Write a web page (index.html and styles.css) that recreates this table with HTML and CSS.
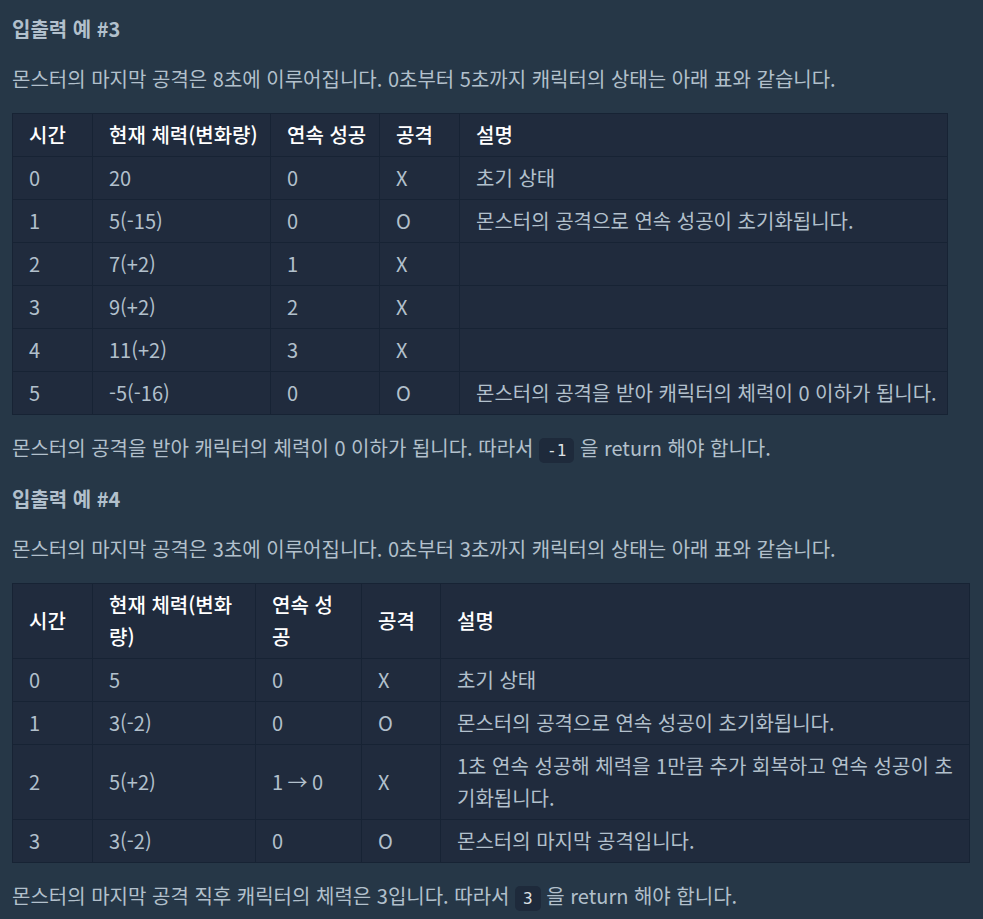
FILE: index.html
```html
<!DOCTYPE html>
<html lang="ko">
<head>
<meta charset="utf-8">
<link rel="stylesheet" href="styles.css">
</head>
<body>
<div class="content">
  <h5 class="heading">입출력 예 #3</h5>
  <p class="lead">몬스터의 마지막 공격은 8초에 이루어집니다. 0초부터 5초까지 캐릭터의 상태는 아래 표와 같습니다.</p>
  <table class="tbl tbl-fit">
    <colgroup><col class="c1"><col class="t1c2"><col class="t1c3"><col class="t1c4"><col class="t1c5"></colgroup>
    <thead><tr><th>시간</th><th>현재 체력(변화량)</th><th>연속 성공</th><th>공격</th><th>설명</th></tr></thead>
    <tbody>
      <tr><td>0</td><td>20</td><td>0</td><td>X</td><td>초기 상태</td></tr>
      <tr><td>1</td><td>5(-15)</td><td>0</td><td>O</td><td>몬스터의 공격으로 연속 성공이 초기화됩니다.</td></tr>
      <tr><td>2</td><td>7(+2)</td><td>1</td><td>X</td><td></td></tr>
      <tr><td>3</td><td>9(+2)</td><td>2</td><td>X</td><td></td></tr>
      <tr><td>4</td><td>11(+2)</td><td>3</td><td>X</td><td></td></tr>
      <tr><td>5</td><td>-5(-16)</td><td>0</td><td>O</td><td>몬스터의 공격을 받아 캐릭터의 체력이 0 이하가 됩니다.</td></tr>
    </tbody>
  </table>
  <p class="after">몬스터의 공격을 받아 캐릭터의 체력이 0 이하가 됩니다. 따라서 <code class="chip">-1</code> 을 return 해야 합니다.</p>

  <h5 class="heading">입출력 예 #4</h5>
  <p class="lead">몬스터의 마지막 공격은 3초에 이루어집니다. 0초부터 3초까지 캐릭터의 상태는 아래 표와 같습니다.</p>
  <table class="tbl tbl-full">
    <colgroup><col class="c1"><col class="t2c2"><col class="t2c3"><col class="t2c4"><col></colgroup>
    <thead><tr><th>시간</th><th>현재 체력(변화량)</th><th>연속 성공</th><th>공격</th><th>설명</th></tr></thead>
    <tbody>
      <tr><td>0</td><td>5</td><td>0</td><td>X</td><td>초기 상태</td></tr>
      <tr><td>1</td><td>3(-2)</td><td>0</td><td>O</td><td>몬스터의 공격으로 연속 성공이 초기화됩니다.</td></tr>
      <tr><td>2</td><td>5(+2)</td><td>1 → 0</td><td>X</td><td>1초 연속 성공해 체력을 1만큼 추가 회복하고 연속 성공이 초기화됩니다.</td></tr>
      <tr><td>3</td><td>3(-2)</td><td>0</td><td>O</td><td>몬스터의 마지막 공격입니다.</td></tr>
    </tbody>
  </table>
  <p class="after last">몬스터의 마지막 공격 직후 캐릭터의 체력은 3입니다. 따라서 <code class="chip">3</code> 을 return 해야 합니다.</p>
</div>
</body>
</html>
```
FILE: styles.css
```css
html, body {
  margin: 0;
  padding: 0;
  background: #263747;
}
body {
  font-family: "Noto Sans CJK KR", "Noto Sans", sans-serif;
  color: #b2c0cc;
  font-size: 20px;
}
.content {
  width: 958px;
  padding: 13px 0 0 12px;
}
.heading {
  margin: 0 0 18px;
  font-size: 20px;
  line-height: 32px;
  font-weight: 700;
  color: #b2c0cc;
}
.lead {
  margin: 0 0 18px;
  line-height: 32px;
}
.after {
  margin: 0 0 19px;
  line-height: 32px;
}
.tbl {
  border-collapse: collapse;
  background: #202b3d;
  margin: 0 0 17px;
}
.tbl-fit {
  table-layout: auto;
  white-space: nowrap;
}
.tbl-full {
  width: 958px;
  table-layout: fixed;
}
.c1 { width: 80px; }
.t1c2 { width: 178px; }
.t1c3 { width: 109px; }
.t1c4 { width: 80px; }
.t1c5 { width: 488px; }
.t2c2 { width: 163px; }
.t2c3 { width: 106px; }
.t2c4 { width: 79px; }
.tbl th, .tbl td {
  border: 1px solid #172334;
  padding: 5px 16px;
  line-height: 32px;
  text-align: left;
  vertical-align: middle;
  font-size: 20px;
}
.tbl-fit th, .tbl-fit td {
  padding-right: 8px;
}
.tbl th {
  color: #ffffff;
  font-weight: 500;
}
.tbl td {
  color: #b2c0cc;
  font-weight: 400;
}
.chip {
  font-family: "DejaVu Sans Mono", "Liberation Mono", monospace;
  font-size: 16px;
  line-height: 19px;
  color: #dee2e6;
  background: #1e2a3b;
  border-radius: 5px;
  padding: 3px 8px;
}
```
